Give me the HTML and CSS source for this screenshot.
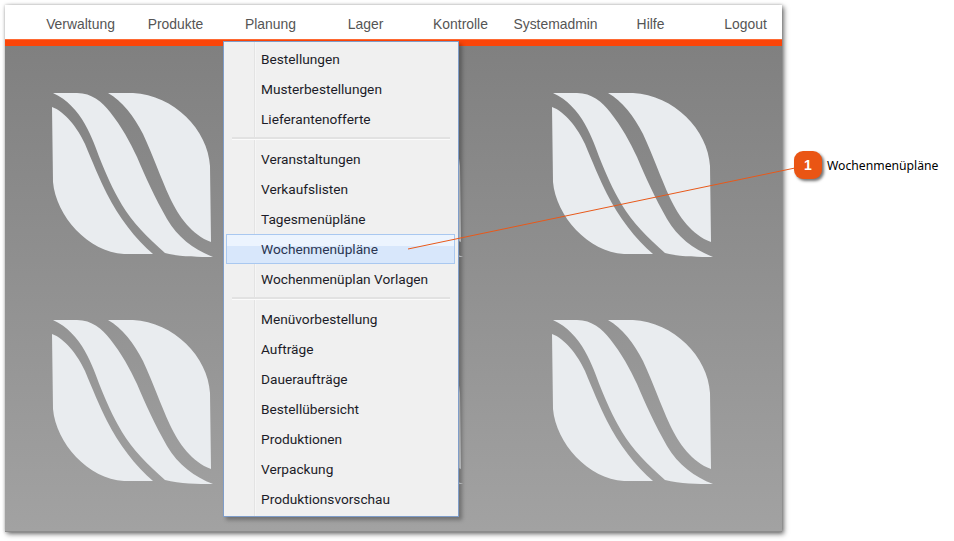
FILE: index.html
```html
<!DOCTYPE html>
<html lang="de">
<head>
<meta charset="utf-8">
<title>Wochenmenüpläne</title>
<link rel="stylesheet" href="styles.css">
</head>
<body>
<svg class="defs" width="0" height="0" aria-hidden="true">
  <symbol id="leaf" viewBox="0 0 162 165">
    <path d="M56 1 L81 1 C122 3 156 38 158 74 L159 150 C140 143 127 125 118 106 C108 84 102 66 91 42 C82 24 70 9 56 1 Z"/>
    <path d="M1 1 L25 1 C40 1 50 10 58 20 C70 35 78 50 85 65 C93 84 103 106 115 127 C126 146 143 158 161 165 C146 165 128 165 113 161 C96 146 80 130 70 113 C60 96 55 84 48 67 C41 48 30 14 1 1 Z"/>
    <path d="M0 15 C12 19 26 36 33 52 C40 69 48 88 55 102 C66 124 84 148 101 162 L72 162 C36 160 4 124 1 90 Z"/>
  </symbol>
</svg>
<div class="app">
  <nav class="topnav">
    <a class="navitem">Verwaltung</a>
    <a class="navitem">Produkte</a>
    <a class="navitem">Planung</a>
    <a class="navitem">Lager</a>
    <a class="navitem">Kontrolle</a>
    <a class="navitem">Systemadmin</a>
    <a class="navitem">Hilfe</a>
    <a class="navitem">Logout</a>
  </nav>
  <div class="accent"></div>
  <main class="canvas">
    <svg class="leaf"><use href="#leaf"/></svg>
    <svg class="leaf"><use href="#leaf"/></svg>
    <svg class="leaf"><use href="#leaf"/></svg>
    <svg class="leaf"><use href="#leaf"/></svg>
    <svg class="leaf"><use href="#leaf"/></svg>
    <svg class="leaf"><use href="#leaf"/></svg>
  </main>
</div>
<ul class="menu">
  <li class="entry">Bestellungen</li>
  <li class="entry">Musterbestellungen</li>
  <li class="entry">Lieferantenofferte</li>
  <li class="sep"></li>
  <li class="entry">Veranstaltungen</li>
  <li class="entry">Verkaufslisten</li>
  <li class="entry">Tagesmenüpläne</li>
  <li class="entry active">Wochenmenüpläne</li>
  <li class="entry">Wochenmenüplan Vorlagen</li>
  <li class="sep"></li>
  <li class="entry">Menüvorbestellung</li>
  <li class="entry">Aufträge</li>
  <li class="entry">Daueraufträge</li>
  <li class="entry">Bestellübersicht</li>
  <li class="entry">Produktionen</li>
  <li class="entry">Verpackung</li>
  <li class="entry">Produktionsvorschau</li>
</ul>
<svg class="leader" width="954" height="541" aria-hidden="true"><line x1="408" y1="249" x2="795" y2="168"/></svg>
<div class="callout"><span class="badge">1</span><span class="label">Wochenmenüpläne</span></div>
</body>
</html>
```
FILE: styles.css
```css
* { box-sizing: border-box; }
html, body { margin: 0; padding: 0; }
body {
  width: 954px;
  height: 541px;
  background: #fff;
  overflow: hidden;
  position: relative;
  font-family: "Liberation Sans", Arial, sans-serif;
}
.defs { position: absolute; }
.app {
  width: 777px;
  height: 527px;
  margin: 5px 0 0 5px;
  display: flex;
  flex-direction: column;
  box-shadow: 2px 2px 5px rgba(0,0,0,.55), 0 0 3px rgba(0,0,0,.2);
  overflow: hidden;
  background: #fff;
}
.topnav {
  height: 34px;
  flex: none;
  display: grid;
  grid-template-columns: repeat(8, 95px);
  padding-left: 28px;
  align-items: center;
  padding-top: 4px;
  font-size: 13.9px;
  color: #555;
}
.navitem { text-align: center; }
.accent {
  height: 7px;
  flex: none;
  background: #fb4509;
  border-top: 1px solid #ff6a33;
}
.canvas {
  flex: 1;
  min-height: 0;
  display: grid;
  grid-template-columns: repeat(3, 162px);
  grid-auto-rows: 165px;
  column-gap: 88px;
  row-gap: 62px;
  padding: 46px 0 0 47px;
  background: linear-gradient(#808080, #a2a2a2);
  border-bottom: 1px solid #8c8c8c;
}
.leaf { width: 162px; height: 165px; fill: #e9ecef; }
.menu {
  position: absolute;
  left: 223px;
  top: 41px;
  width: 236px;
  height: 476px;
  margin: 0;
  padding: 2px 3px 3px 2px;
  list-style: none;
  background: linear-gradient(to right, #f0f0f0 30px, #e3e3e3 30px, #e3e3e3 31px, #fbfbfb 31px, #f0f0f0 32px);
  border: 1px solid #7f9dc9;
  box-shadow: 3px 3px 4px rgba(0,0,0,.3);
  font-family: Roboto, Tahoma, sans-serif;
  font-size: 13.7px;
  color: #1c1c28;
}
.entry {
  height: 30px;
  line-height: 28px;
  padding-left: 34px;
  border: 1px solid transparent;
}
.active {
  border-color: #a9c8f0;
  background: linear-gradient(#ecf4fe 0, #ecf4fe 40%, #d8e7fb 40%, #d8e7fb 100%);
  color: #2a3550;
}
.sep {
  height: 10px;
  padding-top: 3px;
  margin-left: 6px;
  margin-right: 5px;
}
.sep::before {
  content: "";
  display: block;
  height: 2px;
  background: #e2e2e2;
  border-bottom: 1px solid #fbfbfb;
}
.leader {
  position: absolute;
  left: 0;
  top: 0;
  pointer-events: none;
}
.leader line { stroke: #e8591a; stroke-width: 1; }
.callout {
  position: absolute;
  left: 794px;
  top: 151px;
  display: flex;
  align-items: center;
  gap: 5px;
}
.badge {
  width: 28px;
  height: 28px;
  border-radius: 9px;
  background: #ea5514;
  color: #fff;
  font: bold 14px/28px "Liberation Sans", Arial, sans-serif;
  text-align: center;
  box-shadow: 2px 2px 3px rgba(0,0,0,.55);
}
.label {
  font-family: "Noto Sans", Tahoma, sans-serif;
  font-size: 12.2px;
  color: #000;
}
```
